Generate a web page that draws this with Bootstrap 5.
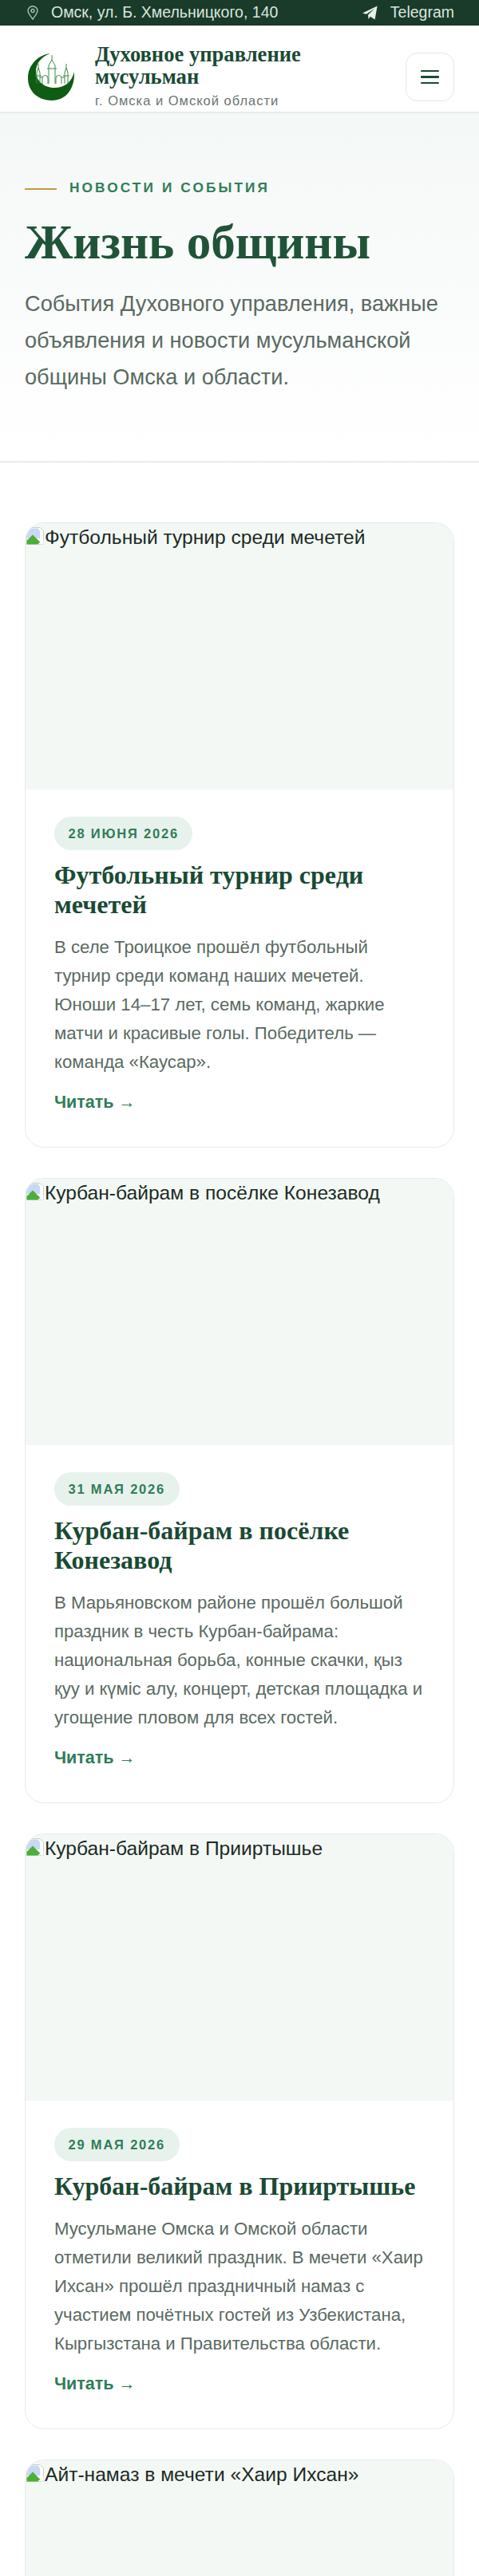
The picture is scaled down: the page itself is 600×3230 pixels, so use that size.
<!DOCTYPE html>
<html lang="ru">
<head>
    <meta charset="UTF-8">
    <meta name="viewport" content="width=device-width, initial-scale=1.0">
    <title>Жизнь общины</title>
    <link href="https://cdn.jsdelivr.net/npm/bootstrap@5.3.0/dist/css/bootstrap.min.css" rel="stylesheet">
    <style>
        body {
            font-family: "Liberation Sans", Arial, sans-serif;
            color: #1c2b24;
            background: #fff;
        }
        .top-strip {
            height: 32px;
            background: #1a3a2a;
            color: #d9e6df;
            font-size: 19.5px;
            padding: 0 31px 0 34px;
            border-bottom: 1px solid #14301f;
        }
        .top-strip a {
            color: inherit;
            text-decoration: none;
        }
        .site-nav {
            height: 110px;
            padding: 21px 31px 0 35px;
            border-bottom: 2px solid #e8ecea;
            background: #fff;
        }
        .brand-text {
            margin-bottom: 3px;
        }
        .brand-title {
            font-family: "Liberation Serif", serif;
            font-size: 26.6px;
            font-weight: 700;
            line-height: 28px;
            color: #1a4a34;
        }
        .brand-sub {
            font-size: 16.5px;
            line-height: 20px;
            letter-spacing: 1px;
            color: #6a7570;
            margin-top: 6px;
        }
        .menu-btn {
            width: 61px;
            height: 61px;
            border: 1.5px solid #e3e8e5;
            border-radius: 15px;
            background: #fff;
            padding: 0;
            gap: 5px;
        }
        .menu-bar {
            display: block;
            width: 23px;
            height: 2.5px;
            background: #1a4a34;
            border-radius: 1px;
        }
        .hero-block {
            height: 438px;
            padding: 82px 31px 0;
            background: linear-gradient(180deg, #f4f8f6 0%, #ffffff 100%);
            border-bottom: 2px solid #e8ecea;
        }
        .hero-label {
            font-size: 17.25px;
            line-height: 22px;
            font-weight: 700;
            letter-spacing: 3.1px;
            color: #2f7d58;
        }
        .hero-line {
            width: 40px;
            height: 2px;
            background: #c8973f;
            margin-top: 3px;
        }
        .hero-title {
            font-family: "Liberation Serif", serif;
            font-size: 61px;
            font-weight: 700;
            line-height: 72px;
            color: #1f5438;
            margin: 22px 0 18px;
        }
        .hero-text {
            font-size: 27.2px;
            line-height: 46px;
            color: #5a6a62;
            margin: 0;
        }
        .news-list {
            height: 2650px;
            padding: 75px 31px 0;
            gap: 38px;
            overflow: hidden;
        }
        .news-card {
            border: 1.5px solid #e6eae8;
            border-radius: 24px;
            overflow: hidden;
            flex-shrink: 0;
        }
        /* последняя карточка обрезана низом кадра */
        .news-card-last {
            flex: 1 1 0;
            min-height: 0;
            border-bottom: 0;
            border-radius: 24px 24px 0 0;
        }
        .news-card-last .news-pic {
            height: 100%;
        }
        .news-pic {
            height: 334px;
            background: #f3f8f5;
            font-size: 24.6px;
            line-height: 36px;
            color: #1c2b24;
            white-space: nowrap;
        }
        .news-pic svg {
            display: inline-block;
            vertical-align: -2px;
        }
        .news-body {
            padding: 34px 36px 41px;
        }
        .news-date {
            background: #e8f2ed;
            color: #2f7d58;
            font-size: 16.5px;
            font-weight: 700;
            letter-spacing: 1.8px;
            line-height: 24px;
            padding: 9px 17.5px;
        }
        .news-title {
            font-family: "Liberation Serif", serif;
            font-size: 32px;
            font-weight: 700;
            line-height: 37px;
            color: #1a4a34;
            margin: 13px 0 17px;
        }
        .news-text {
            font-size: 22.2px;
            line-height: 36px;
            color: #5a6a62;
            margin: 0 0 17px;
        }
        .news-more {
            font-size: 21.5px;
            line-height: 30px;
            font-weight: 700;
            color: #2f7d58;
            text-decoration: none;
        }
        .news-more span {
            font-weight: 400;
            font-size: 21px;
        }
    </style>
</head>
<body>
    <!-- Верхняя полоса -->
    <div class="top-strip d-flex justify-content-between align-items-center">
        <span class="d-flex align-items-center gap-3">
            <svg width="14" height="18" viewBox="0 0 14 18" fill="none" stroke="#a9c2b5" stroke-width="1.4">
                <path d="M7 17C4 12.5 1 9.6 1 6.6A6 5.8 0 0 1 13 6.6C13 9.6 10 12.5 7 17Z"/>
                <circle cx="7" cy="6.5" r="2"/>
            </svg>
            Омск, ул. Б. Хмельницкого, 140
        </span>
        <a href="#" class="d-flex align-items-center gap-3">
            <svg width="19" height="18" viewBox="0 0 19 18" fill="#e6efe9">
                <path d="M0 9.6 18.6.4 15.6 17.4 9.8 13.8 7.6 17 7 11.8 15 3.8 5 10.8Z"/>
            </svg>
            Telegram
        </a>
    </div>

    <!-- Шапка -->
    <nav class="site-nav navbar d-flex justify-content-between align-items-center flex-nowrap">
        <a href="#" class="d-flex align-items-center gap-4 text-decoration-none">
            <svg width="60" height="60" viewBox="0 0 60 60">
                <path fill="#0f5c13" d="M28 0C12 2 0 15 0 31 0 48 13 59 30 59 47 59 59 45 58 23 55 36 46 43 33 43 19 43 10 33 10 23 10 12 17 4 28 0Z"/>
                <g fill="none" stroke="#3f8a4e" stroke-width="1">
                    <path d="M30 2v6M26 15l4-7 4 7v23M26 15v23M24 19h12"/>
                    <path d="M13 13v5M11 24l2-6 2 6v14M11 24v14M9 28h8"/>
                    <path d="M48 13v5M46 24l2-6 2 6v14M46 24v14M44 28h8"/>
                    <path d="M18 38V31a3 3 0 0 1 7 0v7M35 38V31a3 3 0 0 1 7 0v7M15 30h3M42 30h4"/>
                </g>
            </svg>
            <span class="brand-text">
                <span class="brand-title d-block">Духовное управление<br>мусульман</span>
                <span class="brand-sub d-block">г. Омска и Омской области</span>
            </span>
        </a>
        <button class="menu-btn btn d-flex flex-column align-items-center justify-content-center" type="button" aria-label="Меню">
            <span class="menu-bar"></span>
            <span class="menu-bar"></span>
            <span class="menu-bar"></span>
        </button>
    </nav>

    <!-- Заголовок раздела -->
    <header class="hero-block">
        <div class="d-flex align-items-center gap-3 hero-label">
            <span class="hero-line"></span>
            НОВОСТИ И СОБЫТИЯ
        </div>
        <h1 class="hero-title">Жизнь общины</h1>
        <p class="hero-text">События Духовного управления, важные объявления и новости мусульманской общины Омска и области.</p>
    </header>

    <main class="news-list d-flex flex-column">
        <article class="news-card card">
            <div class="news-pic"><svg width="24" height="24" viewBox="0 0 16 16"><path fill="#fff" stroke="#c4c9cc" stroke-width=".6" d="M1 15V4l3-3h8l3 3v11Z"/><path fill="#c9d8f5" d="M1.4 10V4.6L4.5 1.6h6L12 4v6Z"/><path fill="#4caf37" d="M1 15v-3l5-5 6 6 1 2Z"/><path fill="#fff" d="M10 15l5-4v4Z"/></svg>Футбольный турнир среди мечетей</div>
            <div class="news-body">
                <span class="news-date badge rounded-pill">28 ИЮНЯ 2026</span>
                <h2 class="news-title">Футбольный турнир среди мечетей</h2>
                <p class="news-text">В селе Троицкое прошёл футбольный турнир среди команд наших мечетей. Юноши 14–17 лет, семь команд, жаркие матчи и красивые голы. Победитель — команда «Каусар».</p>
                <a href="#" class="news-more">Читать <span>→</span></a>
            </div>
        </article>

        <article class="news-card card">
            <div class="news-pic"><svg width="24" height="24" viewBox="0 0 16 16"><path fill="#fff" stroke="#c4c9cc" stroke-width=".6" d="M1 15V4l3-3h8l3 3v11Z"/><path fill="#c9d8f5" d="M1.4 10V4.6L4.5 1.6h6L12 4v6Z"/><path fill="#4caf37" d="M1 15v-3l5-5 6 6 1 2Z"/><path fill="#fff" d="M10 15l5-4v4Z"/></svg>Курбан-байрам в посёлке Конезавод</div>
            <div class="news-body">
                <span class="news-date badge rounded-pill">31 МАЯ 2026</span>
                <h2 class="news-title">Курбан-байрам в посёлке Конезавод</h2>
                <p class="news-text">В Марьяновском районе прошёл большой праздник в честь Курбан-байрама: национальная борьба, конные скачки, қыз қуу и күміс алу, концерт, детская площадка и угощение пловом для всех гостей.</p>
                <a href="#" class="news-more">Читать <span>→</span></a>
            </div>
        </article>

        <article class="news-card card">
            <div class="news-pic"><svg width="24" height="24" viewBox="0 0 16 16"><path fill="#fff" stroke="#c4c9cc" stroke-width=".6" d="M1 15V4l3-3h8l3 3v11Z"/><path fill="#c9d8f5" d="M1.4 10V4.6L4.5 1.6h6L12 4v6Z"/><path fill="#4caf37" d="M1 15v-3l5-5 6 6 1 2Z"/><path fill="#fff" d="M10 15l5-4v4Z"/></svg>Курбан-байрам в Прииртышье</div>
            <div class="news-body">
                <span class="news-date badge rounded-pill">29 МАЯ 2026</span>
                <h2 class="news-title">Курбан-байрам в Прииртышье</h2>
                <p class="news-text">Мусульмане Омска и Омской области отметили великий праздник. В мечети «Хаир Ихсан» прошёл праздничный намаз с участием почётных гостей из Узбекистана, Кыргызстана и Правительства области.</p>
                <a href="#" class="news-more">Читать <span>→</span></a>
            </div>
        </article>

        <article class="news-card news-card-last card">
            <div class="news-pic"><svg width="24" height="24" viewBox="0 0 16 16"><path fill="#fff" stroke="#c4c9cc" stroke-width=".6" d="M1 15V4l3-3h8l3 3v11Z"/><path fill="#c9d8f5" d="M1.4 10V4.6L4.5 1.6h6L12 4v6Z"/><path fill="#4caf37" d="M1 15v-3l5-5 6 6 1 2Z"/><path fill="#fff" d="M10 15l5-4v4Z"/></svg>Айт-намаз в мечети «Хаир Ихсан»</div>
        </article>
    </main>

    <script src="https://cdn.jsdelivr.net/npm/bootstrap@5.3.0/dist/js/bootstrap.bundle.min.js"></script>
</body>
</html>
